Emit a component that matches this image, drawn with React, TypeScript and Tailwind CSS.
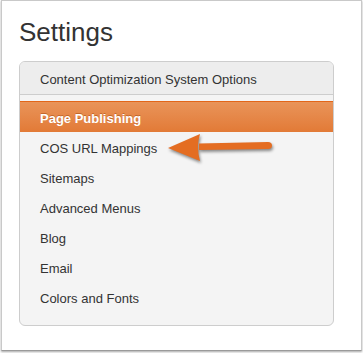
const items = ["COS URL Mappings", "Sitemaps", "Advanced Menus", "Blog", "Email", "Colors and Fonts"];

function Arrow() {
  return (
    <svg
      width="120"
      height="40"
      viewBox="0 0 120 40"
      className="absolute left-[140px] top-[32px] drop-shadow-[1px_2px_1.5px_rgba(0,0,0,0.45)]"
    >
      <path d="M39 16.5 L108 15 Q112 15 112 18.5 Q112 22 108 22 L39 23 Z" fill="#e46d22" />
      <path d="M8 21 L40 7 Q36 20 40 34 Z" fill="#e46d22" />
    </svg>
  );
}

export default function App() {
  return (
    <div className="w-[363px] h-[353px] bg-white font-['Liberation_Sans',Arial,sans-serif]">
      <div className="ml-px w-[361px] h-[351px] border border-[#c9c9c9] border-b-[#9a9a9a] shadow-[0_1px_2px_rgba(0,0,0,0.35)] pt-[16px] pl-[17px]">
        <h1 className="text-[26px] leading-[30px] text-[#333]">Settings</h1>
        <div className="mt-[14px] w-[315px] rounded-[6px] border border-[#cdcdcd] bg-[#f4f4f4] overflow-hidden">
          <div className="h-[33px] pt-[4px] flex items-center pl-[20px] bg-[#ededed] border-b border-[#cdcdcd] text-[13px] text-[#333]">
            Content Optimization System Options
          </div>
          <div className="pt-[6px] pb-[13px] relative">
            <div className="h-[31px] pt-[3px] border-t border-[#e2661a] bg-gradient-to-b from-[#e99459] to-[#e27a36] flex items-center pl-[20px] text-[13px] font-bold text-white [text-shadow:0_-1px_0_rgba(150,60,0,0.45)]">
              Page Publishing
            </div>
            {items.map((item) => (
              <div key={item} className="h-[30px] pt-[3px] flex items-center pl-[20px] text-[13px] text-[#333]">
                {item}
              </div>
            ))}
            <Arrow />
          </div>
        </div>
      </div>
    </div>
  );
}
